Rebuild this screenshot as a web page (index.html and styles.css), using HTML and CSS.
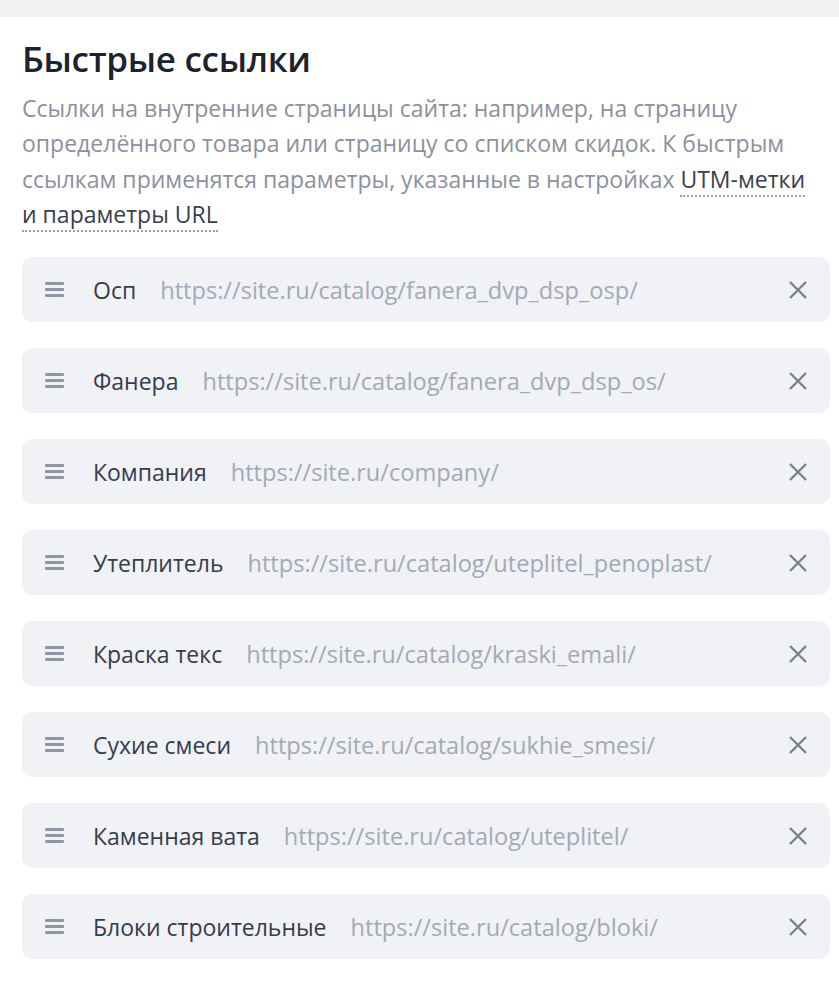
FILE: index.html
```html
<!DOCTYPE html>
<html lang="ru">
<head>
<meta charset="utf-8">
<link rel="stylesheet" href="styles.css">
</head>
<body>
<div class="topband"></div>
<section class="panel">
  <h1 class="title">Быстрые ссылки</h1>
  <p class="desc">Ссылки на внутренние страницы сайта: например, на страницу определённого товара или страницу со списком скидок. К быстрым ссылкам применятся параметры, указанные в настройках <span class="link">UTM-метки и параметры URL</span></p>
  <ul class="list">
    <li class="row"><span class="drag"><i></i><i></i><i></i></span><span class="label">Осп</span><span class="url">https://site.ru/catalog/fanera_dvp_dsp_osp/</span><span class="close"><svg viewBox="0 0 20 20" width="20" height="20"><path d="M2 2L18 18M18 2L2 18"/></svg></span></li>
    <li class="row"><span class="drag"><i></i><i></i><i></i></span><span class="label">Фанера</span><span class="url">https://site.ru/catalog/fanera_dvp_dsp_os/</span><span class="close"><svg viewBox="0 0 20 20" width="20" height="20"><path d="M2 2L18 18M18 2L2 18"/></svg></span></li>
    <li class="row"><span class="drag"><i></i><i></i><i></i></span><span class="label">Компания</span><span class="url">https://site.ru/company/</span><span class="close"><svg viewBox="0 0 20 20" width="20" height="20"><path d="M2 2L18 18M18 2L2 18"/></svg></span></li>
    <li class="row"><span class="drag"><i></i><i></i><i></i></span><span class="label">Утеплитель</span><span class="url">https://site.ru/catalog/uteplitel_penoplast/</span><span class="close"><svg viewBox="0 0 20 20" width="20" height="20"><path d="M2 2L18 18M18 2L2 18"/></svg></span></li>
    <li class="row"><span class="drag"><i></i><i></i><i></i></span><span class="label">Краска текс</span><span class="url">https://site.ru/catalog/kraski_emali/</span><span class="close"><svg viewBox="0 0 20 20" width="20" height="20"><path d="M2 2L18 18M18 2L2 18"/></svg></span></li>
    <li class="row"><span class="drag"><i></i><i></i><i></i></span><span class="label">Сухие смеси</span><span class="url">https://site.ru/catalog/sukhie_smesi/</span><span class="close"><svg viewBox="0 0 20 20" width="20" height="20"><path d="M2 2L18 18M18 2L2 18"/></svg></span></li>
    <li class="row"><span class="drag"><i></i><i></i><i></i></span><span class="label">Каменная вата</span><span class="url">https://site.ru/catalog/uteplitel/</span><span class="close"><svg viewBox="0 0 20 20" width="20" height="20"><path d="M2 2L18 18M18 2L2 18"/></svg></span></li>
    <li class="row"><span class="drag"><i></i><i></i><i></i></span><span class="label">Блоки строительные</span><span class="url">https://site.ru/catalog/bloki/</span><span class="close"><svg viewBox="0 0 20 20" width="20" height="20"><path d="M2 2L18 18M18 2L2 18"/></svg></span></li>
  </ul>
</section>
</body>
</html>
```
FILE: styles.css
```css
html, body {
  margin: 0;
  padding: 0;
  background: #ffffff;
  font-family: "Open Sans", "Noto Sans", sans-serif;
}
.topband {
  height: 17px;
  background: #f2f2f2;
}
.panel {
  padding: 0 9px 0 22px;
}
.title {
  margin: 21px 0 0 0;
  font-size: 35px;
  line-height: 42px;
  font-weight: 600;
  color: #1d2230;
  letter-spacing: -0.3px;
}
.desc {
  max-width: 800px;
  margin: 11px 0 0 0;
  font-size: 23px;
  line-height: 35.3px;
  color: #8c919e;
}
.link {
  color: #3a3f4c;
  border-bottom: 2px dotted #9aa0ac;
}
.list {
  list-style: none;
  margin: 25px 0 0 0;
  padding: 0;
  display: flex;
  flex-direction: column;
  gap: 26px;
}
.row {
  height: 65px;
  display: flex;
  align-items: center;
  background: #f0f2f6;
  border-radius: 10px;
  padding: 0 22px 0 23px;
}
.drag {
  display: flex;
  flex-direction: column;
  gap: 3px;
  width: 19px;
  margin-right: 29px;
}
.drag i {
  display: block;
  height: 3px;
  background: #8f95a3;
  border-radius: 1px;
}
.label {
  font-size: 23px;
  font-weight: 500;
  color: #363c4c;
  margin-right: 24px;
  white-space: nowrap;
}
.url {
  font-size: 23.6px;
  color: #a4a9b6;
  flex: 1;
  white-space: nowrap;
}
.close {
  display: flex;
  width: 20px;
  height: 20px;
}
.close svg path {
  stroke: #7b8192;
  stroke-width: 2.4;
  fill: none;
}
```
